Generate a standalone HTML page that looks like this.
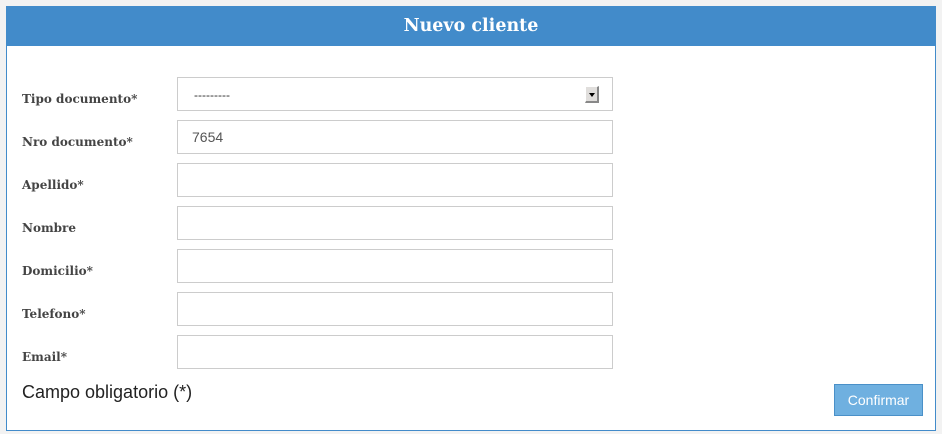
<!DOCTYPE html>
<html><head><style>
body{margin:0;background:#f2f2f2;width:942px;height:434px;overflow:hidden;font-family:"Liberation Sans",sans-serif}
.panel{position:absolute;left:6px;top:6px;width:928px;height:424px;background:#fff;border:1px solid #428bca;border-top:none}
.hd{position:absolute;left:6px;top:6px;width:930px;height:40px;background:#428bca;color:#fff;font:bold 17.5px "DejaVu Serif",serif;text-align:center;line-height:40px}
.lbl{position:absolute;left:22px;font:bold 12px "DejaVu Serif",serif;color:#444}
.in{position:absolute;left:177px;width:434px;height:32px;border:1px solid #ccc;background:#fff;box-sizing:content-box;font-size:14px;color:#555;line-height:32px}
.btn{position:absolute;left:834px;top:384px;width:87px;height:30px;background:#6fb0e0;border:1px solid #4a90c8;color:#fff;font-size:14px;text-align:center;line-height:30px}
</style></head><body>
<div class="panel"></div>
<div class="hd">Nuevo cliente</div>
<div class="lbl" style="top:92px">Tipo documento*</div>
<div class="in" style="top:77px"><span style="margin-left:16px;font-size:12px;color:#333">---------</span>
<div style="position:absolute;left:407px;top:8px;width:14px;height:17px;background:#e0dedc;border-right:2px solid #888;border-bottom:2px solid #888;border-top:1px solid #fff;border-left:1px solid #fff;box-sizing:border-box"><div style="position:absolute;left:3px;top:6px;border-left:3px solid transparent;border-right:3px solid transparent;border-top:4px solid #000"></div></div></div>
<div class="lbl" style="top:135px">Nro documento*</div>
<div class="in" style="top:120px"><span style="margin-left:14px">7654</span></div>
<div class="lbl" style="top:178px">Apellido*</div>
<div class="in" style="top:163px"></div>
<div class="lbl" style="top:221px">Nombre</div>
<div class="in" style="top:206px"></div>
<div class="lbl" style="top:264px">Domicilio*</div>
<div class="in" style="top:249px"></div>
<div class="lbl" style="top:307px">Telefono*</div>
<div class="in" style="top:292px"></div>
<div class="lbl" style="top:350px">Email*</div>
<div class="in" style="top:335px"></div>
<div style="position:absolute;left:22px;top:382px;font-size:18px;color:#222">Campo obligatorio (*)</div>
<div class="btn">Confirmar</div>
</body></html>
